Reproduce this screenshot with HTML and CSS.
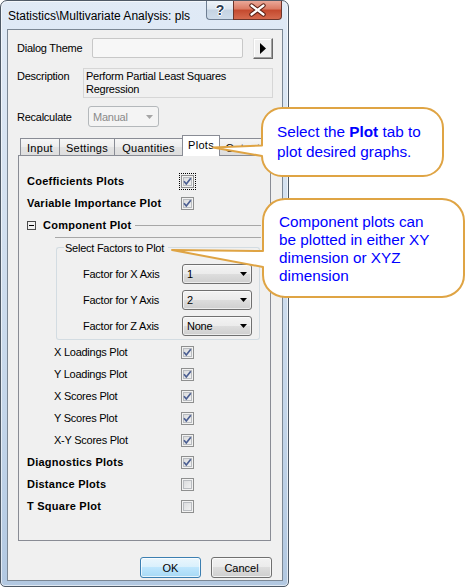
FILE: index.html
```html
<!DOCTYPE html>
<html>
<head>
<meta charset="utf-8">
<link rel="stylesheet" href="styles.css">
</head>
<body>
<div class="window">
  <div class="titlebar">
    <div class="title">Statistics\Multivariate Analysis: pls</div>
    <div class="caps">
      <div class="cap help"><span class="q">?</span></div>
      <div class="cap close">
        <svg width="47" height="18" viewBox="0 0 47 18"><path d="M17.5 4.5 L29.5 13.5 M29.5 4.5 L17.5 13.5" stroke="#5b2014" stroke-width="4.4" stroke-linecap="round" fill="none"/><path d="M17.5 4.5 L29.5 13.5 M29.5 4.5 L17.5 13.5" stroke="#fff" stroke-width="2.2" stroke-linecap="round" fill="none"/></svg>
      </div>
    </div>
  </div>
  <div class="client">
    <div class="row theme-row">
      <span class="lbl">Dialog Theme</span>
      <div class="textbox"></div>
      <div class="arrow-btn"><svg width="6" height="11" viewBox="0 0 6 11"><path d="M0 0 L6 5.5 L0 11 Z" fill="#000"/></svg></div>
    </div>
    <div class="row desc-row">
      <span class="lbl">Description</span>
      <div class="desc-box">Perform Partial Least Squares<br>Regression</div>
    </div>
    <div class="row recalc-row">
      <span class="lbl">Recalculate</span>
      <div class="combo dis"><span>Manual</span><svg width="7" height="4" viewBox="0 0 7 4"><path d="M0 0 H7 L3.5 4 Z" fill="#a5a5a5"/></svg></div>
    </div>
    <div class="tabs">
      <div class="tab w1">Input</div>
      <div class="tab w2">Settings</div>
      <div class="tab w3">Quantities</div>
      <div class="tab w4 sel">Plots</div>
      <div class="tab w5">Output</div>
    </div>
    <div class="panel">
      <div class="prow"><span class="plbl b">Coefficients Plots</span><span class="cb on focus"><svg width="11" height="11" viewBox="0 0 11 11"><path d="M2 5.2 L4.3 8 L8.8 2.2" stroke="#4c5f92" stroke-width="1.7" fill="none"/></svg></span></div>
      <div class="prow"><span class="plbl b">Variable Importance Plot</span><span class="cb on"><svg width="11" height="11" viewBox="0 0 11 11"><path d="M2 5.2 L4.3 8 L8.8 2.2" stroke="#4c5f92" stroke-width="1.7" fill="none"/></svg></span></div>
      <div class="prow"><span class="minus"></span><span class="b">Component Plot</span><span class="rule"></span></div>
      <div class="sep"></div>
      <div class="grp">
        <div class="grp-head"><span>Select Factors to Plot</span></div>
        <div class="grp-body">
          <div class="grow"><span class="glbl">Factor for X Axis</span><div class="combo f"><span>1</span><svg width="7" height="4" viewBox="0 0 7 4"><path d="M0 0 H7 L3.5 4 Z" fill="#000"/></svg></div></div>
          <div class="grow"><span class="glbl">Factor for Y Axis</span><div class="combo f"><span>2</span><svg width="7" height="4" viewBox="0 0 7 4"><path d="M0 0 H7 L3.5 4 Z" fill="#000"/></svg></div></div>
          <div class="grow"><span class="glbl">Factor for Z Axis</span><div class="combo f"><span>None</span><svg width="7" height="4" viewBox="0 0 7 4"><path d="M0 0 H7 L3.5 4 Z" fill="#000"/></svg></div></div>
        </div>
      </div>
      <div class="prow ind first"><span class="plbl">X Loadings Plot</span><span class="cb on"><svg width="11" height="11" viewBox="0 0 11 11"><path d="M2 5.2 L4.3 8 L8.8 2.2" stroke="#4c5f92" stroke-width="1.7" fill="none"/></svg></span></div>
      <div class="prow ind"><span class="plbl">Y Loadings Plot</span><span class="cb on"><svg width="11" height="11" viewBox="0 0 11 11"><path d="M2 5.2 L4.3 8 L8.8 2.2" stroke="#4c5f92" stroke-width="1.7" fill="none"/></svg></span></div>
      <div class="prow ind"><span class="plbl">X Scores Plot</span><span class="cb on"><svg width="11" height="11" viewBox="0 0 11 11"><path d="M2 5.2 L4.3 8 L8.8 2.2" stroke="#4c5f92" stroke-width="1.7" fill="none"/></svg></span></div>
      <div class="prow ind"><span class="plbl">Y Scores Plot</span><span class="cb on"><svg width="11" height="11" viewBox="0 0 11 11"><path d="M2 5.2 L4.3 8 L8.8 2.2" stroke="#4c5f92" stroke-width="1.7" fill="none"/></svg></span></div>
      <div class="prow ind"><span class="plbl">X-Y Scores Plot</span><span class="cb on"><svg width="11" height="11" viewBox="0 0 11 11"><path d="M2 5.2 L4.3 8 L8.8 2.2" stroke="#4c5f92" stroke-width="1.7" fill="none"/></svg></span></div>
      <div class="prow"><span class="plbl b">Diagnostics Plots</span><span class="cb on"><svg width="11" height="11" viewBox="0 0 11 11"><path d="M2 5.2 L4.3 8 L8.8 2.2" stroke="#4c5f92" stroke-width="1.7" fill="none"/></svg></span></div>
      <div class="prow"><span class="plbl b">Distance Plots</span><span class="cb"></span></div>
      <div class="prow"><span class="plbl b">T Square Plot</span><span class="cb"></span></div>
    </div>
    <div class="buttons">
      <div class="btn def">OK</div>
      <div class="btn">Cancel</div>
    </div>
  </div>
</div>

<svg class="callouts" width="467" height="588" viewBox="0 0 467 588">
  <path d="M282 108 H423 A20 20 0 0 1 443 128 V156 A20 20 0 0 1 423 176 H282 A20 20 0 0 1 262 156 L213 147.5 L262 145.5 V128 A20 20 0 0 1 282 108 Z" fill="#fff" stroke="#dfa444" stroke-width="2" stroke-linejoin="round"/>
  <path d="M285 199 H442 A22 22 0 0 1 464 221 V275 A22 22 0 0 1 442 297 H285 A22 22 0 0 1 263 275 V267 L172 250 L263 251 V221 A22 22 0 0 1 285 199 Z" fill="#fff" stroke="#dfa444" stroke-width="2" stroke-linejoin="round"/>
</svg>
<div class="ctext c1">Select the <b>Plot</b> tab to<br>plot desired graphs.</div>
<div class="ctext c2">Component plots can<br>be plotted in either XY<br>dimension or XYZ<br>dimension</div>
</body>
</html>
```
FILE: styles.css
```css
* { box-sizing: border-box; }
html, body { margin: 0; padding: 0; }
body {
  width: 467px;
  height: 588px;
  background: #fff;
  position: relative;
  overflow: hidden;
  font-family: "Liberation Sans", Arial, sans-serif;
  font-size: 11px;
  color: #000;
  letter-spacing: -0.25px;
}

.window {
  width: 289px;
  height: 587px;
  border: 1px solid #4e5966;
  border-radius: 7px 7px 5px 5px;
  background: linear-gradient(180deg, #e0eaf6 0%, #d4e1f0 35%, #c4d6ea 70%, #b2c8e1 100%);
  box-shadow: inset 0 0 0 1px rgba(255,255,255,0.6);
  display: flex;
  flex-direction: column;
}

.titlebar {
  height: 28px;
  flex: none;
  display: flex;
  align-items: center;
  padding-left: 7px;
  padding-right: 6px;
}
.title {
  flex: 1;
  font-size: 12px;
  letter-spacing: 0;
  padding-top: 1px;
}
.caps {
  display: flex;
  align-self: flex-start;
  height: 19px;
}
.cap {
  height: 19px;
  border: 1px solid #6e7e92;
  border-top: none;
  display: flex;
  align-items: center;
  justify-content: center;
}
.help {
  width: 27px;
  border-right: none;
  border-radius: 0 0 0 4px;
  background: linear-gradient(#eef3f8, #dce5ef 45%, #c5d3e2 50%, #cfdcea);
}
.q {
  font-weight: bold;
  font-size: 14px;
  color: #2b3b52;
  letter-spacing: 0;
  text-shadow: 1px 0 0 #fff, -1px 0 0 #fff, 0 1px 0 #fff, 0 -1px 0 #fff;
  line-height: 16px;
}
.close {
  width: 49px;
  border-color: #6d352a;
  border-radius: 0 0 4px 0;
  background: linear-gradient(#eaa898, #da7a63 45%, #c4492e 50%, #d56a4e);
}

.client {
  margin: 0 5px 5px 6px;
  height: 552px;
  border: 1px solid #7b8794;
  background: #f0f0f0;
  display: flex;
  flex-direction: column;
}

.row { display: flex; padding-left: 9px; flex: none; }
.theme-row { margin-top: 8px; height: 21px; align-items: flex-start; }
.theme-row .lbl { width: 75px; line-height: 20px; }
.textbox {
  width: 151px;
  height: 20px;
  border: 1px solid #c8c8c8;
  border-radius: 2px;
  background: #f7f7f7;
}
.arrow-btn {
  width: 20px;
  height: 21px;
  margin-left: 10px;
  border: 1px solid;
  border-color: #e3e3e3 #696969 #696969 #e3e3e3;
  background: #f0f0f0;
  box-shadow: inset -1px -1px 0 #a0a0a0, inset 1px 1px 0 #fff;
  display: flex;
  align-items: center;
  justify-content: center;
}

.desc-row { margin-top: 9px; }
.desc-row .lbl { width: 66px; padding-top: 2px; line-height: 13px; }
.desc-box {
  width: 190px;
  height: 30px;
  border: 1px solid #d6d6d6;
  padding: 1px 0 0 2px;
  line-height: 13px;
}

.recalc-row { margin-top: 8px; height: 21px; align-items: center; }
.recalc-row .lbl { width: 71px; }

.combo {
  display: flex;
  align-items: center;
  justify-content: space-between;
  border: 1px solid #707070;
  border-radius: 3px;
  background: linear-gradient(#f3f3f3, #ebebeb 50%, #dddddd 50%, #cfcfcf);
  box-shadow: inset 0 0 0 1px rgba(255,255,255,0.6);
  padding: 0 4px 0 4px;
}
.combo.dis {
  width: 71px;
  height: 21px;
  border-color: #b4b8bb;
  background: #f4f4f4;
  box-shadow: none;
  color: #8a8a8a;
  padding-right: 5px;
}
.combo.f { width: 70px; height: 20px; }

.tabs {
  margin-top: 8px;
  height: 20px;
  flex: none;
  display: flex;
  align-items: flex-end;
  padding-left: 12px;
  position: relative;
  z-index: 1;
}
.tab {
  height: 17px;
  border: 1px solid #898c95;
  border-bottom: none;
  margin-left: -1px;
  display: flex;
  align-items: center;
  justify-content: center;
  letter-spacing: 0.3px;
  background: linear-gradient(#f6f6f6, #ededed 50%, #e3e3e3 50%, #dedede);
  padding-top: 1px;
}
.tab:first-child { margin-left: 0; }
.w1 { width: 40px; }
.w2 { width: 56px; }
.w3 { width: 69px; }
.w4 { width: 38px; }
.w5 { width: 48px; }
.tab.sel {
  height: 21px;
  margin-bottom: -1px;
  background: #fff;
  position: relative;
  z-index: 2;
  padding-top: 0;
  padding-bottom: 2px;
}

.panel {
  margin-left: 10px;
  width: 253px;
  height: 386px;
  flex: none;
  border: 1px solid #898c95;
  padding: 14px 9px 0 8px;
  display: flex;
  flex-direction: column;
}
.prow { height: 22px; flex: none; display: flex; align-items: center; }
.prow.first { margin-top: 1px; }
.plbl { width: 154px; flex: none; }
.ind .plbl { padding-left: 27px; }
.b { font-weight: bold; letter-spacing: 0.25px; }

.cb {
  width: 13px;
  height: 13px;
  flex: none;
  border: 1px solid #8e8f8f;
  background: linear-gradient(135deg, #d6d7d9, #f6f6f6);
  box-shadow: inset 0 0 0 1px #f2f2f2, inset 0 0 0 2px #b9bcc0;
  display: flex;
  align-items: center;
  justify-content: center;
}
.cb svg { display: block; }
.cb.focus { outline: 1px dotted #000; outline-offset: 1px; }

.minus {
  width: 9px;
  height: 9px;
  flex: none;
  border: 1px solid #4a4a4a;
  margin-right: 7px;
  background: linear-gradient(#000, #000) center / 5px 1px no-repeat;
}
.rule { flex: 1; height: 1px; background: #a7a7a7; margin-left: 4px; }
.sep { flex: none; height: 1px; background: #a7a7a7; margin: 1px 0 0 28px; }

.grp { flex: none; width: 204px; margin: 3px 0 0 29px; }
.grp-head { display: flex; align-items: center; height: 14px; }
.grp-head::before {
  content: "";
  width: 7px;
  height: 7px;
  align-self: flex-end;
  border-top: 1px solid #d3dce2;
  border-left: 1px solid #d3dce2;
  border-top-left-radius: 3px;
}
.grp-head::after {
  content: "";
  flex: 1;
  height: 7px;
  align-self: flex-end;
  border-top: 1px solid #d3dce2;
  border-right: 1px solid #d3dce2;
  border-top-right-radius: 3px;
}
.grp-head span { padding: 0 4px 0 1px; }
.grp-body {
  border: 1px solid #d3dce2;
  border-top: none;
  border-radius: 0 0 3px 3px;
  padding: 6px 0 0 26px;
}
.grow { height: 26px; display: flex; align-items: center; }
.glbl { width: 99px; flex: none; }

.buttons {
  display: flex;
  justify-content: flex-end;
  gap: 10px;
  margin-top: 16px;
  padding-right: 10px;
  flex: none;
}
.btn {
  width: 61px;
  height: 21px;
  border: 1px solid #707070;
  border-radius: 3px;
  background: linear-gradient(#f2f2f2, #ebebeb 50%, #dddddd 50%, #cfcfcf);
  box-shadow: inset 0 0 0 1px rgba(255,255,255,0.7);
  display: flex;
  align-items: center;
  justify-content: center;
  letter-spacing: 0;
}
.btn.def {
  border-color: #3c7fb1;
  background: linear-gradient(#eaf6fd, #d9f0fc 50%, #bee6fd 50%, #a7d9f5);
}

.callouts {
  position: absolute;
  left: 0;
  top: 0;
  z-index: 10;
  pointer-events: none;
}
.ctext {
  position: absolute;
  z-index: 11;
  color: #0000ff;
  font-family: "Liberation Sans", Arial, sans-serif;
  font-size: 15.3px;
  letter-spacing: 0;
  white-space: nowrap;
}
.c1 { left: 277px; top: 122px; line-height: 20px; }
.c2 { left: 279px; top: 213px; line-height: 18px; }
```
